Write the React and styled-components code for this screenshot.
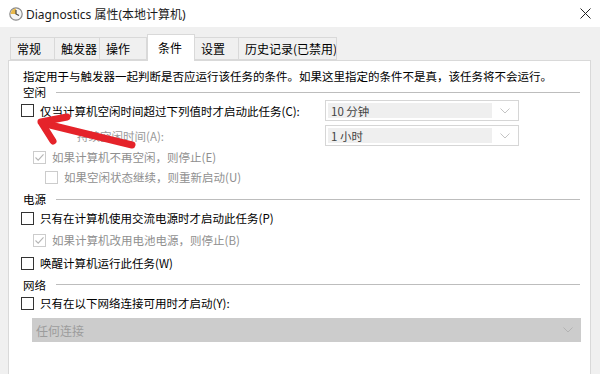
import styled, { createGlobalStyle } from "styled-components";

const GlobalStyle = createGlobalStyle`
  body {
    margin: 0;
    font-family: "Noto Sans CJK SC", "Noto Sans", sans-serif;
    font-size: 11.5px;
    color: #000000;
  }
`;

const tabs = [
  { label: "常规", width: 45 },
  { label: "触发器", width: 45 },
  { label: "操作", width: 47 },
  { label: "条件", width: 48, active: true },
  { label: "设置", width: 44 },
  { label: "历史记录(已禁用)", width: 98 },
];

function Check({ checked, disabled }) {
  return (
    <Box $disabled={disabled}>
      {checked && (
        <svg width="11" height="11" viewBox="0 0 11 11">
          <path d="M1.5 5.5 L4.2 8.2 L9.5 2.3" fill="none" stroke="#b5b5b5" strokeWidth="1.1" />
        </svg>
      )}
    </Box>
  );
}

function Chevron({ color }) {
  return (
    <svg width="10" height="6" viewBox="0 0 10 6">
      <path d="M0.5 0.5 L5 5 L9.5 0.5" fill="none" stroke={color} strokeWidth="1" />
    </svg>
  );
}

function App() {
  return (
    <Window>
      <GlobalStyle />
      <TitleBar>
        <svg width="14" height="14" viewBox="0 0 14 14">
          <circle cx="7" cy="7" r="6.2" fill="#f4f4f4" stroke="#8a8a8a" strokeWidth="1.2" />
          <path d="M7 7 L7 1.6 A5.4 5.4 0 0 0 1.6 7 Z" fill="#e8b84a" />
          <path d="M7 3 L7 7 L10 8.5" fill="none" stroke="#444" strokeWidth="1.2" />
        </svg>
        <TitleText>Diagnostics 属性(本地计算机)</TitleText>
        <Close>
          <svg width="11" height="11" viewBox="0 0 11 11">
            <path d="M0.5 0.5 L10.5 10.5 M10.5 0.5 L0.5 10.5" stroke="#222" strokeWidth="1" />
          </svg>
        </Close>
      </TitleBar>
      <Body>
        <TabRow>
          {tabs.map((t) => (
            <Tab key={t.label} $width={t.width} $active={t.active}>
              {t.label}
            </Tab>
          ))}
        </TabRow>
        <Panel>
          <Desc>指定用于与触发器一起判断是否应运行该任务的条件。如果这里指定的条件不是真，该任务将不会运行。</Desc>
          <Section $h={16}>
            <span>空闲</span>
            <Rule />
          </Section>
          <IdleRow $h={21}>
            <Option>
              <Check />
              <span>仅当计算机空闲时间超过下列值时才启动此任务(C):</span>
            </Option>
            <Combo>
              <ComboFill>10 分钟</ComboFill>
              <Chevron color="#c4c4c4" />
            </Combo>
          </IdleRow>
          <IdleRow $h={21} $mt={4}>
            <Label>持续空闲时间(A):</Label>
            <Combo>
              <ComboFill>1 小时</ComboFill>
              <Chevron color="#c4c4c4" />
            </Combo>
          </IdleRow>
          <Option $indent={12} $mt={1} $disabled>
            <Check checked disabled />
            <span>如果计算机不再空闲，则停止(E)</span>
          </Option>
          <Option $indent={24} $disabled>
            <Check disabled />
            <span>如果空闲状态继续，则重新启动(U)</span>
          </Option>
          <Section $h={18} $mt={3}>
            <span>电源</span>
            <Rule />
          </Section>
          <Option>
            <Check />
            <span>只有在计算机使用交流电源时才启动此任务(P)</span>
          </Option>
          <Option $indent={12} $mt={2} $disabled>
            <Check checked disabled />
            <span>如果计算机改用电池电源，则停止(B)</span>
          </Option>
          <Option $mt={3}>
            <Check />
            <span>唤醒计算机运行此任务(W)</span>
          </Option>
          <Section $h={17} $mt={3}>
            <span>网络</span>
            <Rule />
          </Section>
          <Option>
            <Check />
            <span>只有在以下网络连接可用时才启动(Y):</span>
          </Option>
          <NetCombo>
            <span>任何连接</span>
            <Chevron color="#b3b3b3" />
          </NetCombo>
        </Panel>
      </Body>
      <Arrow width="600" height="374" viewBox="0 0 600 374">
        <g fill="none" stroke="#e5232a" strokeWidth="7" strokeLinecap="round" strokeLinejoin="round">
          <path d="M132 145 L46 124" />
          <path d="M67 117 L41 122 L53 141" />
        </g>
      </Arrow>
    </Window>
  );
}

const Window = styled.div`
  position: relative;
  width: 600px;
  height: 374px;
  overflow: hidden;
  background: #f0f0f0;
`;

const TitleBar = styled.div`
  height: 27px;
  background: #ffffff;
  display: flex;
  align-items: center;
  padding-left: 9px;
  box-sizing: border-box;
`;

const TitleText = styled.span`
  margin-left: 3px;
  font-family: "Noto Sans", "Noto Sans CJK SC", sans-serif;
  font-size: 12px;
  color: #1a1a1a;
`;

const Close = styled.div`
  margin-left: auto;
  width: 30px;
  display: flex;
  justify-content: center;
`;

const Body = styled.div`
  padding: 0 9px 0 8px;
`;

const TabRow = styled.div`
  display: flex;
  align-items: flex-end;
  height: 33px;
  padding-left: 2px;
  position: relative;
  z-index: 1;
`;

const Tab = styled.div`
  width: ${(p) => p.$width}px;
  height: ${(p) => (p.$active ? 27 : 23)}px;
  box-sizing: border-box;
  border: 1px solid #d9d9d9;
  border-left: ${(p) => (p.$active ? "1px solid #d9d9d9" : "none")};
  border-bottom: ${(p) => (p.$active ? "none" : "1px solid #d9d9d9")};
  margin-bottom: ${(p) => (p.$active ? -1 : 0)}px;
  background: ${(p) => (p.$active ? "#ffffff" : "#f0f0f0")};
  display: flex;
  align-items: ${(p) => (p.$active ? "flex-start" : "center")};
  padding: ${(p) => (p.$active ? "4px 0 0 10px" : "0 0 0 6px")};
  font-size: 12px;
  white-space: nowrap;
  overflow: hidden;
  &:first-child {
    border-left: 1px solid #d9d9d9;
  }
`;

const Panel = styled.div`
  background: #ffffff;
  border: 1px solid #d9d9d9;
  height: 340px;
  box-sizing: border-box;
  padding: 7px 0 0 12px;
`;

const Desc = styled.div`
  height: 16px;
  line-height: 16px;
  margin-left: 2px;
  white-space: nowrap;
`;

const Section = styled.div`
  display: flex;
  align-items: center;
  height: ${(p) => p.$h}px;
  margin-top: ${(p) => p.$mt || 0}px;
  margin-left: 2px;
  gap: 10px;
`;

const Rule = styled.div`
  flex: 1;
  height: 1px;
  background: #bdbdbd;
  margin-right: 10px;
`;

const IdleRow = styled.div`
  display: grid;
  grid-template-columns: 304px 194px;
  align-items: center;
  height: ${(p) => p.$h}px;
  margin-top: ${(p) => p.$mt || 0}px;
`;

const Option = styled.div`
  display: flex;
  align-items: center;
  gap: 6px;
  height: 20px;
  margin-top: ${(p) => p.$mt || 0}px;
  margin-left: ${(p) => p.$indent || 0}px;
  color: ${(p) => (p.$disabled ? "#8f8f8f" : "#000000")};
  white-space: nowrap;
`;

const Label = styled.span`
  margin-left: 56px;
  color: #9a9a9a;
`;

const Box = styled.span`
  width: 13px;
  height: 13px;
  box-sizing: border-box;
  border: 1px solid ${(p) => (p.$disabled ? "#cccccc" : "#333333")};
  background: #ffffff;
  display: flex;
  align-items: center;
  justify-content: center;
  flex-shrink: 0;
`;

const Combo = styled.div`
  height: 21px;
  box-sizing: border-box;
  border: 1px solid #d6d6d6;
  display: flex;
  align-items: center;
  padding: 2px 8px 2px 2px;
  gap: 8px;
`;

const ComboFill = styled.div`
  flex: 1;
  height: 100%;
  background: #efefef;
  display: flex;
  align-items: center;
  padding-left: 3px;
  color: #444444;
`;

const NetCombo = styled.div`
  margin: 5px 0 0 11px;
  width: 549px;
  height: 24px;
  box-sizing: border-box;
  background: #cccccc;
  display: flex;
  align-items: center;
  justify-content: space-between;
  padding: 0 8px 0 4px;
  color: #9c9c9c;
  font-size: 12px;
`;

const Arrow = styled.svg`
  position: absolute;
  left: 0;
  top: 0;
  pointer-events: none;
`;

export default App;
